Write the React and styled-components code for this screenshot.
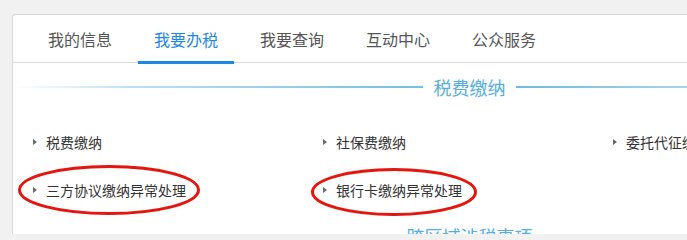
import React from 'react';
import styled, { createGlobalStyle } from 'styled-components';

const GlobalStyle = createGlobalStyle`
  html, body {
    margin: 0;
    height: 234px;
    background: #f1f1f1;
    overflow: hidden;
    font-family: "Noto Sans CJK SC", "Noto Sans", sans-serif;
  }
`;

const Card = styled.div`
  margin: 14px 0 0 12px;
  height: 219px;
  background: #fff;
  border: 1px solid #d8d8d8;
  border-right: none;
  border-bottom: none;
  border-radius: 4px 0 0 0;
  overflow: hidden;
`;

const TabBar = styled.div`
  display: flex;
  height: 47px;
  padding-left: 19px;
  border-bottom: 1px solid #d9d9d9;
`;

const Tab = styled.div`
  position: relative;
  flex: none;
  width: 96px;
  margin-right: 10px;
  text-align: center;
  font-size: 16px;
  line-height: 49px;
  color: ${(p) => (p.active ? '#1c88e6' : '#555')};

  &::after {
    content: '';
    display: ${(p) => (p.active ? 'block' : 'none')};
    position: absolute;
    left: 0;
    right: 0;
    bottom: -2px;
    height: 3px;
    background: #1c88e6;
  }
`;

/* 912px wide so the title sits centred at the same spot as in the page */
const SectionTitle = styled.div`
  display: grid;
  grid-template-columns: 1fr auto 1fr;
  align-items: center;
  width: 912px;
  height: 24px;
  margin-top: ${(p) => p.top}px;
`;

const LeftLine = styled.div`
  height: 2px;
  background: linear-gradient(to right, rgba(120, 190, 230, 0) 0%, rgba(120, 190, 230, 0.5) 30%, #74bde4 100%);
`;

const RightLine = styled.div`
  height: 2px;
  background: linear-gradient(to right, #6fb9e2 0px, #a8d4ec 172px, #d4e9f5 400px);
`;

const TitleText = styled.div`
  padding: 0 10px 0 11px;
  font-size: 18px;
  line-height: 24px;
  color: #55aede;
  white-space: nowrap;
`;

const ItemGrid = styled.div`
  display: grid;
  grid-template-columns: repeat(3, 290px);
  grid-auto-rows: 48px;
  padding: 19px 0 0 20px;
`;

const Item = styled.div`
  position: relative;
  display: flex;
  align-items: center;
  font-size: 14px;
  color: #333;
  white-space: nowrap;
`;

const Arrow = styled.span`
  width: 0;
  height: 0;
  margin-right: 9px;
  border-left: 4px solid #6a6a6a;
  border-top: 3.5px solid transparent;
  border-bottom: 3.5px solid transparent;
`;

const Mark = styled.svg`
  position: absolute;
  left: ${(p) => p.dx}px;
  top: ${(p) => p.dy}px;
  overflow: visible;
  pointer-events: none;
`;

const rows = [
  { label: '税费缴纳' },
  { label: '社保费缴纳' },
  { label: '委托代征缴纳' },
  { label: '三方协议缴纳异常处理', mark: { dx: -15, dy: -1, w: 182, h: 50 } },
  { label: '银行卡缴纳异常处理', mark: { dx: -12, dy: 2, w: 166, h: 48 } },
];

function Ellipse({ mark }) {
  return (
    <Mark dx={mark.dx} dy={mark.dy} width={mark.w} height={mark.h}>
      <ellipse
        cx={mark.w / 2}
        cy={mark.h / 2}
        rx={mark.w / 2 - 1.5}
        ry={mark.h / 2 - 1.5}
        fill="none"
        stroke="#e5150f"
        strokeWidth="3"
      />
    </Mark>
  );
}

export default function App() {
  const tabs = ['我的信息', '我要办税', '我要查询', '互动中心', '公众服务'];

  return (
    <>
      <GlobalStyle />
      <Card>
        <TabBar>
          {tabs.map((t) => (
            <Tab key={t} active={t === '我要办税'}>{t}</Tab>
          ))}
        </TabBar>
        <SectionTitle top={12}>
          <LeftLine />
          <TitleText>税费缴纳</TitleText>
          <RightLine />
        </SectionTitle>
        <ItemGrid>
          {rows.map((r) => (
            <Item key={r.label}>
              <Arrow />
              {r.label}
              {r.mark && <Ellipse mark={r.mark} />}
            </Item>
          ))}
        </ItemGrid>
        <SectionTitle top={10}>
          <LeftLine />
          <TitleText>跨区域涉税事项</TitleText>
          <RightLine />
        </SectionTitle>
      </Card>
    </>
  );
}
